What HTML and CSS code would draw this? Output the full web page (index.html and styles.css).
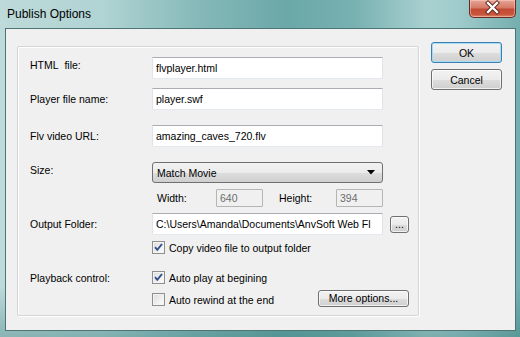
FILE: index.html
```html
<!DOCTYPE html>
<html>
  <head>
    <meta charset="utf-8" />
    <link rel="stylesheet" href="styles.css">
  </head>

  <body>
    <div class="window">
      <div class="titlebar">
        <span class="title">Publish Options</span>
        <div class="close">
          <svg width="47" height="18" viewBox="0 0 47 18">
            <path d="M19 4 L28 13 M28 4 L19 13" stroke="#5a2218" stroke-width="4.2" stroke-linecap="square" fill="none"/>
            <path d="M19 4 L28 13 M28 4 L19 13" stroke="#fff" stroke-width="2.4" stroke-linecap="square" fill="none"/>
          </svg>
        </div>
      </div>

      <div class="client">
        <div class="group">
          <div class="row r1">
            <span class="lbl up">HTML&nbsp; file:</span>
            <input class="field" type="text" value="flvplayer.html">
          </div>
          <div class="row r2">
            <span class="lbl">Player file name:</span>
            <input class="field" type="text" value="player.swf">
          </div>
          <div class="row r3">
            <span class="lbl">Flv video URL:</span>
            <input class="field" type="text" value="amazing_caves_720.flv">
          </div>
          <div class="row r4">
            <span class="lbl up">Size:</span>
            <div class="combo">
              <span>Match Movie</span>
              <svg width="8" height="5" viewBox="0 0 8 5"><path d="M0 0 H8 L4 4.5 Z" fill="#000"/></svg>
            </div>
          </div>
          <div class="row r5">
            <span class="lbl"></span>
            <span class="dim-lbl w">Width:</span>
            <input class="field small" type="text" value="640" disabled>
            <span class="dim-lbl h">Height:</span>
            <input class="field small" type="text" value="394" disabled>
          </div>
          <div class="row r6">
            <span class="lbl">Output Folder:</span>
            <input class="field" type="text" value="C:\Users\Amanda\Documents\AnvSoft Web Fl">
            <button class="btn browse">...</button>
          </div>
          <div class="row r7">
            <span class="lbl"></span>
            <span class="check on"></span>
            <span>Copy video file to output folder</span>
          </div>
          <div class="row r8">
            <span class="lbl">Playback control:</span>
            <span class="check on"></span>
            <span>Auto play at begining</span>
          </div>
          <div class="row r9">
            <span class="lbl"></span>
            <span class="check"></span>
            <span>Auto rewind at the end</span>
            <button class="btn more">More options...</button>
          </div>
        </div>

        <div class="side">
          <button class="btn push default">OK</button>
          <button class="btn push">Cancel</button>
        </div>
      </div>
    </div>
  </body>
</html>
```

FILE: styles.css
```css
body {
  margin: 0;
  font-family: "Liberation Sans", Arial, sans-serif;
  font-size: 10.5px;
  color: #000;
}
.window {
  width: 520px;
  height: 337px;
  overflow: hidden;
  background:
    linear-gradient(180deg, rgba(255,255,255,0) 0%, rgba(255,255,255,0) 85%, rgba(40,110,110,0.35) 100%),
    linear-gradient(90deg, #bedada 0%, #b0d3d3 20%, #86b9b9 38%, #6ba8a8 55%, #78b1b1 68%, #a9d0d0 82%, #a0cccc 88%, #74aeae 100%);
}
.titlebar {
  height: 28px;
  display: flex;
  justify-content: space-between;
  align-items: flex-start;
}
.title {
  font-size: 12px;
  margin: 7px 0 0 7px;
  color: #000;
}
.close {
  width: 47px;
  height: 18px;
  margin-right: 4px;
  box-sizing: border-box;
  border: 1px solid #6a2c22;
  border-top: 0;
  border-radius: 0 0 5px 5px;
  background: linear-gradient(180deg, #e7a596 0%, #d47a66 45%, #c24a33 55%, #c9553c 85%, #de8a70 100%);
  box-shadow: inset 0 0 0 1px rgba(255,220,210,0.45);
}
.close svg {
  display: block;
  margin: -1px 0 0 -1px;
}
.client {
  margin: 0 4px 0 5px;
  height: 301px;
  border: 1px solid #4f7474;
  background: #f0f0f0;
  display: flex;
  align-items: flex-start;
}
.group {
  margin: 17px 0 0 11px;
  padding: 10px 0 0 12px;
  box-sizing: border-box;
  width: 402px;
  height: 270px;
  border: 1px solid #d5d5d5;
  border-radius: 2px;
  box-shadow: inset 1px 1px 0 #fff, 1px 1px 0 #fff;
}
.row {
  display: flex;
  align-items: center;
}
.r1 { height: 22px; }
.r2 { height: 22px; margin-top: 9px; }
.r3 { height: 22px; margin-top: 15px; }
.r4 { height: 21px; margin-top: 15px; }
.r5 { height: 18px; margin-top: 6px; }
.r6 { height: 22px; margin-top: 6px; }
.r7 { height: 13px; margin-top: 6px; }
.r8 { height: 13px; margin-top: 17px; }
.r9 { height: 17px; margin-top: 7px; }
.lbl {
  width: 122px;
  flex: none;
}
.lbl.up {
  margin-bottom: 6px;
}
.field {
  width: 231px;
  height: 22px;
  box-sizing: border-box;
  margin: 0;
  padding: 0 3px;
  font: inherit;
  color: #000;
  background: #fff;
  border: 1px solid #e2e3ea;
  border-top-color: #abadb3;
  border-bottom-color: #e3e9ef;
  border-radius: 1px;
  outline: none;
}
.field.small {
  width: 47px;
  height: 18px;
  background: #f0f0f0;
  color: #6d6d6d;
  border: 1px solid #b5b5b5;
  padding: 0 3px;
}
.dim-lbl.w {
  margin-left: 5px;
  width: 59px;
}
.dim-lbl.h {
  margin-left: 16px;
  width: 57px;
}
.combo {
  width: 231px;
  height: 21px;
  box-sizing: border-box;
  border: 1px solid #707070;
  border-radius: 3px;
  background: linear-gradient(180deg, #f2f2f2 0%, #ebebeb 50%, #dddddd 51%, #cfcfcf 100%);
  display: flex;
  align-items: center;
  justify-content: space-between;
  padding: 0 7px 0 4px;
}
.combo svg {
  display: block;
}
.btn {
  font: inherit;
  color: #000;
  margin: 0;
  padding: 0;
  box-sizing: border-box;
  border: 1px solid #707070;
  border-radius: 3px;
  background: linear-gradient(180deg, #f2f2f2 0%, #ebebeb 50%, #dddddd 51%, #cfcfcf 100%);
  box-shadow: inset 0 0 0 1px rgba(255,255,255,0.7);
}
.browse {
  width: 19px;
  height: 17px;
  margin-left: 7px;
  line-height: 12px;
}
.more {
  width: 91px;
  height: 17px;
  margin-left: auto;
  margin-right: 9px;
  margin-top: -2px;
  line-height: 13px;
}
.check {
  width: 13px;
  height: 13px;
  flex: none;
  box-sizing: border-box;
  border: 1px solid #8e8f8f;
  margin-right: 4px;
  background: linear-gradient(135deg, #dcdcdc 0%, #f4f4f4 70%, #fff 100%);
  box-shadow: inset 0 0 0 1px #f4f4f4;
}
.check.on {
  background:
    url("data:image/svg+xml,%3Csvg xmlns='http://www.w3.org/2000/svg' width='11' height='11' viewBox='0 0 11 11'%3E%3Cpath d='M2 5.2 L4.3 7.8 L9 2' stroke='%23304f8c' stroke-width='1.9' fill='none'/%3E%3C/svg%3E") center / 11px 11px no-repeat,
    linear-gradient(135deg, #dcdcdc 0%, #f4f4f4 70%, #fff 100%);
}
.side {
  margin: 13px 0 0 12px;
  display: flex;
  flex-direction: column;
  gap: 6px;
}
.push {
  width: 71px;
  height: 21px;
}
.push.default {
  border-color: #3c7fb1;
  box-shadow: inset 0 0 0 1px #a3dcf4;
}
```
